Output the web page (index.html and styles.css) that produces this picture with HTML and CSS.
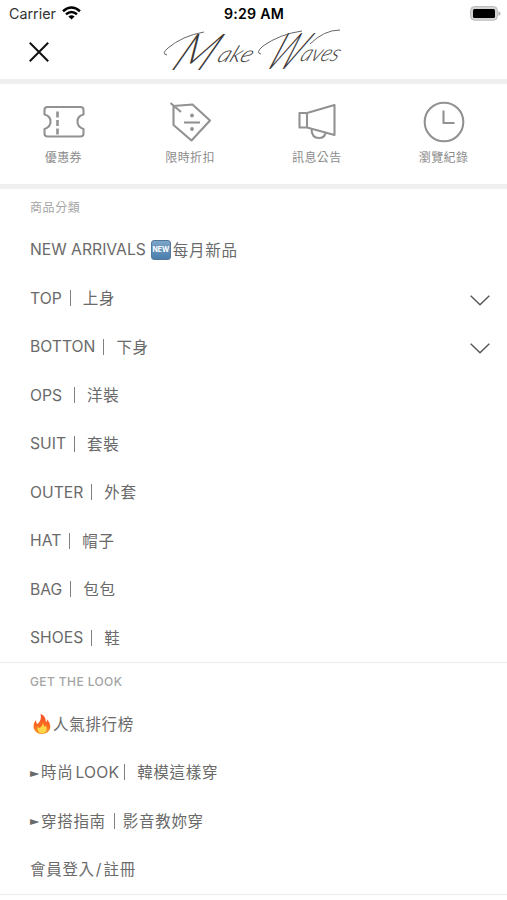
FILE: index.html
```html
<!DOCTYPE html>
<html lang="zh-Hant">
<head>
<meta charset="utf-8">
<meta name="viewport" content="width=device-width">
<title>Make Waves</title>
<link rel="stylesheet" href="styles.css">
</head>
<body>
<div class="status">
  <div class="carrier">Carrier
    <svg width="19" height="14" viewBox="0 0 19 14"><g fill="none" stroke="#000" stroke-width="2.5"><path d="M1 5.2Q9.500-2.200 18 5.200"/><path d="M4 8.300Q9.500 3.600 15 8.300"/></g><path d="M6.400 10.500Q9.500 8 12.600 10.500L9.500 13.600Z"/></svg>
  </div>
  <div class="time">9:29 AM</div>
  <svg class="battery" width="31" height="15" viewBox="0 0 31 15"><rect x=".6" y=".6" width="26.800" height="13.600" rx="3.800" fill="#d4d4d4" stroke="#bbb"/><rect x="3" y="3" width="22" height="9" rx="1.500"/><path d="M28.500 5v5q2-1 2-2.500T28.500 5" fill="#aaa"/></svg>
</div>
<header class="header">
  <svg class="close" width="20" height="20" viewBox="0 0 20 20"><path d="M.8.800 19.200 19.200M19.200.800.800 19.200" stroke="#111" stroke-width="2" fill="none"/></svg>
  <svg class="logo" width="190" height="52" viewBox="160 26 190 52">
    <g class="script">
      <text class="cap" transform="translate(168 70) skewX(-35)" textLength="36" lengthAdjust="spacingAndGlyphs">M</text>
      <text class="low" transform="translate(216 62) skewX(-24)" textLength="34" lengthAdjust="spacingAndGlyphs">ake</text>
      <text class="cap" transform="translate(262 69) skewX(-35)" textLength="29" lengthAdjust="spacingAndGlyphs">W</text>
      <text class="low" transform="translate(299 61) skewX(-24)" textLength="38" lengthAdjust="spacingAndGlyphs">aves</text>
    </g>
    <g class="swash"><path d="M167 55Q161 54 168 48Q182 36 204 32"/><path d="M261 54Q255 53 263 46Q280 34 302 31"/><path d="M310 44Q324 30 340 30"/></g>
  </svg>
</header>
<nav class="shortcuts">
  <a class="shortcut"><svg width="44" height="44" viewBox="0 0 44 44"><path d="M6.500 7H39.500Q42.500 7 42.500 10V14.500Q36.500 16 36.500 21.500T42.500 29V33.500Q42.500 36.500 39.500 36.500H6.500Q3.500 36.500 3.500 33.500V29Q9.500 27 9.500 21.500T3.500 14.500V10Q3.500 7 6.500 7Z"/><path d="M16.500 11.500v6m0 2.500v6m0 2.500v6" stroke-width="2.600"/></svg><span>優惠券</span></a>
  <a class="shortcut"><svg width="44" height="44" viewBox="0 0 44 44"><path d="M5.500 6 24.500 4.500 42 20.500 23.500 40.500 5.500 25ZM2.500 3 13 12"/><path d="M16 22.500H32"/><circle cx="24" cy="15.500" r="1.900" class="dot"/><circle cx="24" cy="29" r="1.900" class="dot"/></svg><span>限時折扣</span></a>
  <a class="shortcut"><svg width="44" height="44" viewBox="0 0 44 44"><path d="M4.500 13H12V27.500H4.500ZM12 13 39.500 5V35L12 27.500M16.500 29Q16.500 38 24 38Q29.500 38 30.500 33"/></svg><span>訊息公告</span></a>
  <a class="shortcut"><svg width="44" height="44" viewBox="0 0 44 44"><circle cx="22" cy="22" r="19.300"/><path d="M21.500 10.500V23H32.500"/></svg><span>瀏覽紀錄</span></a>
</nav>
<section class="group">
  <h2>商品分類</h2>
  <ul>
    <li><span>NEW ARRIVALS</span><span class="new">NEW</span><span class="cjk">每月新品</span></li>
    <li><span>TOP</span><i class="bar"></i><span class="cjk">上身</span><svg class="chev" width="20" height="11" viewBox="0 0 20 11"><path d="M.7.800 10 9.800 19.300.800"/></svg></li>
    <li><span>BOTTON</span><i class="bar"></i><span class="cjk">下身</span><svg class="chev" width="20" height="11" viewBox="0 0 20 11"><path d="M.7.800 10 9.800 19.300.800"/></svg></li>
    <li><span>OPS</span><i class="bar wide"></i><span class="cjk">洋裝</span></li>
    <li><span>SUIT</span><i class="bar"></i><span class="cjk">套裝</span></li>
    <li><span>OUTER</span><i class="bar"></i><span class="cjk">外套</span></li>
    <li><span>HAT</span><i class="bar"></i><span class="cjk">帽子</span></li>
    <li><span>BAG</span><i class="bar"></i><span class="cjk">包包</span></li>
    <li><span>SHOES</span><i class="bar"></i><span class="cjk">鞋</span></li>
  </ul>
</section>
<section class="group">
  <h2 class="latin">GET THE LOOK</h2>
  <ul>
    <li><svg class="fire" width="18" height="20" viewBox="0 0 18 20"><defs><linearGradient id="f" x1="0" y1="0" x2="0" y2="1"><stop offset="0" stop-color="#f4502a"/><stop offset=".6" stop-color="#fb6b20"/><stop offset="1" stop-color="#f99b2c"/></linearGradient></defs><path fill="url(#f)" d="M7.500 0C13 2 12.500 6 13 8Q14.500 7 14 5Q19 11 16.500 16Q14 20 9 20Q3 20 1 15Q-.5 10 3 6Q3 9 4.500 10Q9 6 7.500 0Z"/><path fill="#ffd84a" d="M10 8Q10 11 12 13Q13 12 13 11Q15.500 18.500 9.500 19.300Q3.500 19 4.500 12Q5 14 6.500 14Q10 12 10 8Z"/></svg><span class="cjk">人氣排行榜</span></li>
    <li><span class="tri">►</span><span class="cjk">時尚</span><span class="look">LOOK</span><i class="bar near"></i><span class="cjk">韓模這樣穿</span></li>
    <li><span class="tri">►</span><span class="cjk">穿搭指南</span><i class="bar even"></i><span class="cjk">影音教妳穿</span></li>
    <li><span class="cjk">會員登入</span><span class="slash">/</span><span class="cjk">註冊</span></li>
  </ul>
</section>
</body>
</html>
```
FILE: styles.css
```css
* { box-sizing: border-box; }
body { margin: 0; height: 900px; overflow: hidden; background: #fff; color: #6a6a6a; font-family: Inter, "Noto Sans CJK TC", sans-serif; }
.status { height: 28px; display: grid; grid-template-columns: 1fr auto 1fr; align-items: center; padding: 0 6px 2px 9px; color: #111; }
.carrier { display: flex; align-items: center; gap: 6px; font-size: 14.3px; color: #333; }
.time { font-size: 14.2px; font-weight: 600; color: #000; margin-right: 2px; letter-spacing: .2px; }
.battery { justify-self: end; }
.header { height: 56px; display: flex; align-items: flex-start; padding-left: 29px; border-bottom: 5px solid #efefef; }
.close { margin-top: 14px; }
.logo { margin: -2px 0 0 111px; overflow: visible; }
.script { font-family: Lato, sans-serif; font-weight: 300; fill: #3c3836; }
.cap { font-size: 51px; font-weight: 300; }
.low { font-size: 23px; font-style: italic; }
.swash path { fill: none; stroke: #666; stroke-width: 1; }
.shortcuts { height: 105px; display: grid; grid-template-columns: repeat(4, 1fr); border-bottom: 5px solid #efefef; padding-top: 16px; }
.shortcut { display: flex; flex-direction: column; align-items: center; gap: 4px; font: 12px/18px "Noto Sans CJK TC", sans-serif; letter-spacing: .4px; color: #8c8c8c; }
.shortcut svg { fill: none; stroke: #929292; stroke-width: 2.1; stroke-linejoin: round; }
.shortcut .dot { fill: #929292; stroke: none; }
.group { border-bottom: 1px solid #ececec; }
.group h2 { margin: 0; height: 36.5px; padding-left: 30px; font: 400 12px/36px "Noto Sans CJK TC", sans-serif; letter-spacing: .6px; color: #a4a4a4; }
.group h2.latin { font-family: Inter, sans-serif; font-weight: 500; line-height: 37px; letter-spacing: .4px; }
.group ul { list-style: none; margin: 0; padding: 0; }
.group li { height: 48.5px; display: flex; align-items: center; padding: 1px 17px 0 30px; font-size: 15.7px; line-height: 24px; }
.cjk { font-family: "Noto Sans CJK TC", sans-serif; font-size: 15.5px; letter-spacing: .7px; margin-top: -3px; }
.bar { width: 1px; height: 16px; background: #808080; margin: -1px 12px 0 8px; }
.bar.wide { margin-left: 12px; }
.bar.near { margin-left: 5px; }
.bar.even { margin: -1px 8px 0; }
.look { margin-left: 2px; letter-spacing: .2px; }
.chev { margin: 3px 0 0 auto; fill: none; stroke: #555; stroke-width: 1.4; }
.new { width: 20px; height: 20px; margin: 0 2px 0 5px; border-radius: 3px; border: 1px solid #56789a; background: linear-gradient(#7ca5c8, #4a7eae); color: #fff; font-size: 7px; font-weight: 700; line-height: 18px; text-align: center; }
.fire { margin: 0 2px 0 3px; }
.tri { width: 11px; font: 12px/24px "DejaVu Sans", sans-serif; }
.slash { margin: 0 2px 0 1px; }
```
